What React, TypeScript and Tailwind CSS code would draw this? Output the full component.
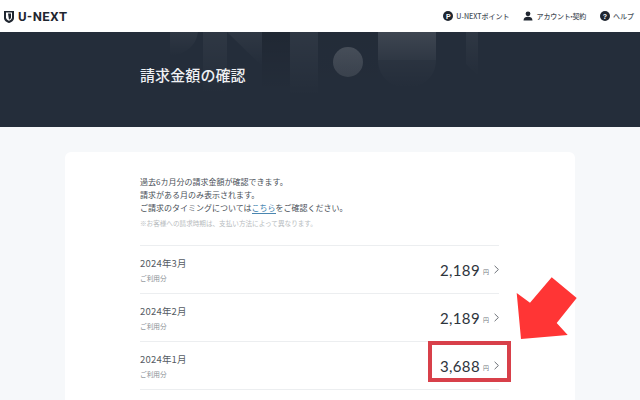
import React from "react";

const cjk = "font-['Noto_Sans_CJK_JP',sans-serif]";

function Row({ month, amount }: { month: string; amount: string }) {
  return (
    <div className="flex h-[48px] items-center justify-between border-t border-[#eceef0]">
      <div className="flex flex-col gap-[3px]">
        <span className={`text-[9.5px] leading-[13px] tracking-[0.2px] text-[#555b63] ${cjk}`}>{month}</span>
        <span className={`text-[6.7px] leading-[10px] text-[#8a9096] ${cjk}`}>ご利用分</span>
      </div>
      <div className="flex items-center">
        <span className="font-['Lato',sans-serif] text-[15px] leading-[20px] tracking-[0.35px] text-[#2e343c]">{amount}</span>
        <span className={`ml-[3px] mt-[5px] text-[6px] leading-[8px] text-[#70767c] ${cjk}`}>円</span>
        <svg width="5" height="9" viewBox="0 0 5 9" className="ml-[5px]" fill="none" stroke="#5b6168" strokeWidth="0.9">
          <path d="M0.6 0.8 L4.4 4.5 L0.6 8.2" />
        </svg>
      </div>
    </div>
  );
}

function NavIcon({ children }: { children: React.ReactNode }) {
  return (
    <span className="flex h-[10px] w-[10px] items-center justify-center rounded-full bg-[#1f2630] text-[7px] font-bold leading-none text-white font-['Liberation_Sans',sans-serif]">
      {children}
    </span>
  );
}

export default function App() {
  return (
    <div className={`relative h-[400px] w-[640px] overflow-hidden bg-[#f6f8fa] ${cjk}`}>
      <header className="flex h-[32px] items-center justify-between bg-white pl-[4px] pr-[6px]">
        <div className="flex items-center gap-[4px]">
          <svg width="10" height="13" viewBox="0 0 10 13">
            <path d="M0 1 H10 V8 C10 10.5 7.5 12.5 5 13 C2.5 12.5 0 10.5 0 8 Z" fill="#1f2630" />
            <path d="M2 2.6 H8 V7.5 C8 9 6.4 10.2 5 10.8 C3.6 10.2 2 9 2 7.5 Z" fill="#fff" />
            <path d="M4 3.5 H7 V7.5 C7 8.5 6 9.3 5 9.8 Z" fill="#1f2630" />
          </svg>
          <span className="font-['Roboto',sans-serif] text-[13px] font-bold leading-none tracking-[0.5px] text-[#1f2630]">U-NEXT</span>
        </div>
        <nav className="flex items-center text-[7px] font-medium leading-none text-[#4a515b]">
          <div className="flex items-center gap-[3px]">
            <NavIcon>P</NavIcon>
            <span>U-NEXTポイント</span>
          </div>
          <div className="ml-[13px] flex items-center gap-[4px]">
            <svg width="10" height="10" viewBox="0 0 10 10" fill="#1f2630">
              <circle cx="5" cy="2.8" r="2.4" />
              <path d="M0.5 9.5 C0.5 6.8 2.5 5.8 5 5.8 C7.5 5.8 9.5 6.8 9.5 9.5 Z" />
            </svg>
            <span className="tracking-[-0.2px]">
              アカウント<span className="mx-[-2.5px]">・</span>契約
            </span>
          </div>
          <div className="ml-[14px] flex items-center gap-[3px]">
            <NavIcon>?</NavIcon>
            <span>ヘルプ</span>
          </div>
        </nav>
      </header>

      <section className="relative flex h-[95px] items-center overflow-hidden bg-[#242d3a] pb-[11px] pl-[140px]">
        <svg className="absolute left-0 top-0" width="640" height="95" viewBox="0 0 640 95">
          <defs>
            <linearGradient id="fade" x1="0" y1="0" x2="0" y2="1">
              <stop offset="0" stopColor="#fff" stopOpacity="0.05" />
              <stop offset="1" stopColor="#fff" stopOpacity="0" />
            </linearGradient>
            <linearGradient id="fadeU" x1="0" y1="0" x2="0" y2="1">
              <stop offset="0" stopColor="#fff" stopOpacity="0.12" />
              <stop offset="1" stopColor="#fff" stopOpacity="0.05" />
            </linearGradient>
            <linearGradient id="fadeUb" x1="0" y1="0" x2="0" y2="1">
              <stop offset="0" stopColor="#fff" stopOpacity="0.03" />
              <stop offset="1" stopColor="#fff" stopOpacity="0" />
            </linearGradient>
            <linearGradient id="dark" x1="0" y1="0" x2="0" y2="1">
              <stop offset="0" stopColor="#000" stopOpacity="0.12" />
              <stop offset="1" stopColor="#000" stopOpacity="0" />
            </linearGradient>
            <linearGradient id="ball" x1="0" y1="0" x2="0" y2="1">
              <stop offset="0" stopColor="#fff" stopOpacity="0.16" />
              <stop offset="1" stopColor="#fff" stopOpacity="0.1" />
            </linearGradient>
          </defs>
          <path d="M170 0 H198 C196 14 186 22 170 24 Z" fill="url(#fade)" />
          <rect x="262" y="0" width="28" height="60" fill="url(#dark)" />
          <rect x="203" y="0" width="24" height="62" fill="url(#fade)" />
          <path d="M227 0 H262 V34 Z" fill="url(#fade)" />
          <rect x="290" y="0" width="28" height="64" fill="url(#fade)" />
          <rect x="318" y="0" width="60" height="60" fill="url(#dark)" opacity="0.3" />
          <circle cx="348" cy="30" r="15" fill="url(#ball)" />
          <rect x="378" y="0" width="58" height="28" fill="url(#fadeU)" />
          <path d="M378 28 H436 C436 46 421 56 407 56 C393 56 378 46 378 28 Z" fill="url(#fadeUb)" />
          <path d="M466 0 H478 V44 L466 32 Z" fill="url(#fade)" />
        </svg>
        <h1 className="relative text-[15px] font-medium leading-none tracking-[0.1px] text-[#eef0f3]">請求金額の確認</h1>
      </section>

      <main className="mx-[65px] mt-[25px] h-[300px] rounded-[6px] bg-white px-[75px] pt-[23px]">
        <div className="w-[359px]">
          <div className="text-[8px] leading-[13px] text-[#4a5058]">
            <p>過去6カ月分の請求金額が確認できます。</p>
            <p>請求がある月のみ表示されます。</p>
            <p>
              ご請求のタイミングについては
              <span className="border-b border-[#4a86b0] text-[#3b80ad]">こちら</span>
              をご確認ください。
            </p>
          </div>
          <p className="mt-[4px] text-[6.6px] leading-[10px] text-[#b8bcc0]">※お客様への請求時期は、支払い方法によって異なります。</p>
          <div className="mt-[17px]">
            <Row month="2024年3月" amount="2,189" />
            <Row month="2024年2月" amount="2,189" />
            <Row month="2024年1月" amount="3,688" />
            <div className="border-t border-[#eceef0]" />
          </div>
        </div>
      </main>

      <div className="absolute left-[428px] top-[341px] h-[41px] w-[83px] border-[4px] border-[#d8404a]" />
      <svg className="absolute left-0 top-0" width="640" height="400" viewBox="0 0 640 400">
        <polygon points="551.7,277.3 576.7,298 556.7,323 567.7,335 521,339 516.7,293 530,302.7" fill="#ff3535" />
      </svg>
    </div>
  );
}
